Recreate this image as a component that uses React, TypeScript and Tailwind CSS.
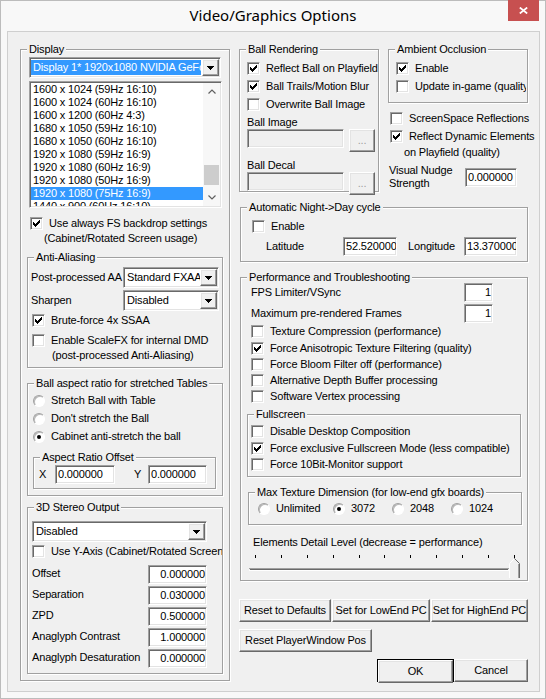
import React from 'react';

const sunken =
  'border border-t-[#a0a0a0] border-l-[#a0a0a0] border-r-white border-b-white shadow-[inset_1px_1px_0_#696969,inset_-1px_-1px_0_#e3e3e3]';
const raised =
  'border border-t-white border-l-white border-r-[#696969] border-b-[#696969] shadow-[inset_-1px_-1px_0_#a0a0a0,inset_1px_1px_0_#e3e3e3] bg-[#f0f0f0]';

function Group({ label, className = '', children }: { label: string; className?: string; children?: React.ReactNode }) {
  return (
    <div className={`relative shrink-0 border border-[#a0a0a0] shadow-[1px_1px_0_#fff,inset_1px_1px_0_#fff] ${className}`}>
      <span className="absolute -top-[7px] left-[6px] px-[2px] bg-[#f0f0f0] leading-[13px] whitespace-nowrap">{label}</span>
      <div className="flex flex-col">{children}</div>
    </div>
  );
}

function CheckMark() {
  const px = [
    [6, 0, 1], [5, 1, 2], [0, 2, 1], [4, 2, 3], [0, 3, 2], [3, 3, 3], [0, 4, 5], [1, 5, 3], [2, 6, 1],
  ];
  return (
    <svg width="7" height="7" viewBox="0 0 7 7" shapeRendering="crispEdges">
      {px.map(([x, y, w], i) => (
        <rect key={i} x={x} y={y} width={w} height={1} fill="#000" />
      ))}
    </svg>
  );
}

function Check({ on = false, children, className = '', textClass = '' }: { on?: boolean; children: React.ReactNode; className?: string; textClass?: string }) {
  return (
    <div className={`flex items-center h-[13px] ${className}`}>
      <span className={`${sunken} w-[13px] h-[13px] bg-white flex items-center justify-center shrink-0`}>{on && <CheckMark />}</span>
      <span className={`ml-[6px] whitespace-nowrap leading-[13px] ${textClass}`}>{children}</span>
    </div>
  );
}

function Radio({ on = false, children, className = '' }: { on?: boolean; children: React.ReactNode; className?: string }) {
  return (
    <div className={`flex items-center h-[13px] ${className}`}>
      <span className="w-[12px] h-[12px] rounded-full border border-t-[#a0a0a0] border-l-[#a0a0a0] border-r-white border-b-white bg-white shadow-[inset_1px_1px_0_#b8b8b8] flex items-center justify-center shrink-0">
        {on && <span className="w-[4px] h-[4px] rounded-full bg-black" />}
      </span>
      <span className="ml-[6px] whitespace-nowrap leading-[13px]">{children}</span>
    </div>
  );
}

function Edit({ value = '', className = '', right = false, disabled = false }: { value?: string; className?: string; right?: boolean; disabled?: boolean }) {
  return (
    <div
      className={`${sunken} h-[19px] shrink-0 flex items-center overflow-hidden whitespace-nowrap ${disabled ? 'bg-[#f0f0f0]' : 'bg-white'} ${right ? 'justify-end pr-[1px]' : 'pl-[2px]'} ${className}`}
    >
      {value}
    </div>
  );
}

function Arrow() {
  return (
    <svg width="7" height="4" viewBox="0 0 7 4" shapeRendering="crispEdges">
      <rect x="0" y="0" width="7" height="1" fill="#000" />
      <rect x="1" y="1" width="5" height="1" fill="#000" />
      <rect x="2" y="2" width="3" height="1" fill="#000" />
      <rect x="3" y="3" width="1" height="1" fill="#000" />
    </svg>
  );
}

function Combo({ value, className = '', selected = false }: { value: string; className?: string; selected?: boolean }) {
  return (
    <div className={`${sunken} bg-white h-[21px] p-[1px] flex shrink-0 ${className}`}>
      <div className="flex-1 min-w-0 overflow-hidden py-[1px] pr-[1px]">
        <div className={`h-full flex items-center pl-[2px] whitespace-nowrap ${selected ? 'bg-[#3399ff] text-white' : ''}`}>{value}</div>
      </div>
      <div className={`${raised} w-[17px] flex items-center justify-center`}>
        <Arrow />
      </div>
    </div>
  );
}

function Button({ children, className = '', gray = false }: { children: React.ReactNode; className?: string; gray?: boolean }) {
  return (
    <div className={`${raised} h-[23px] shrink-0 flex items-center justify-center whitespace-nowrap ${gray ? 'text-[#a0a0a0]' : ''} ${className}`}>
      {children}
    </div>
  );
}

function Chevron({ up }: { up?: boolean }) {
  return (
    <svg width="8" height="5" viewBox="0 0 8 5">
      <polyline points={up ? '0.5,4.5 4,1 7.5,4.5' : '0.5,0.5 4,4 7.5,0.5'} fill="none" stroke="#606060" strokeWidth="1.2" />
    </svg>
  );
}

const modes = [
  '1600 x 1024 (59Hz 16:10)',
  '1600 x 1024 (60Hz 16:10)',
  '1600 x 1200 (60Hz 4:3)',
  '1680 x 1050 (59Hz 16:10)',
  '1680 x 1050 (60Hz 16:10)',
  '1920 x 1080 (59Hz 16:9)',
  '1920 x 1080 (60Hz 16:9)',
  '1920 x 1080 (50Hz 16:9)',
  '1920 x 1080 (75Hz 16:9)',
  '1440 x 900 (60Hz 16:10)',
];

function ListBox() {
  return (
    <div className={`${sunken} bg-white p-[1px] flex ml-[8px] mt-[3px] w-[193px] h-[127px]`}>
      <div className="flex-1 min-w-0 overflow-hidden">
        {modes.map((m, i) => (
          <div key={m} className={`h-[13px] leading-[13px] pl-[2px] whitespace-nowrap ${i === 8 ? 'bg-[#3399ff] text-white' : ''}`}>
            {m}
          </div>
        ))}
      </div>
      <div className="w-[17px] flex flex-col bg-[#f7f7f7]">
        <div className="h-[17px] flex items-center justify-center">
          <Chevron up />
        </div>
        <div className="flex-1">
          <div className="mt-[65px] mx-[1px] h-[20px] bg-[#cdcdcd]" />
        </div>
        <div className="h-[17px] flex items-center justify-center">
          <Chevron />
        </div>
      </div>
    </div>
  );
}

function Slider() {
  const ticks = [7, 33, 59, 85, 111, 136, 162, 188, 214, 240, 266];
  return (
    <svg width="274" height="27" viewBox="0 0 274 27" shapeRendering="crispEdges" className="mt-[3px] ml-[7px]">
      {ticks.map((x, i) => (
        <rect key={x} x={x} y={3} width={1} height={i === ticks.length - 1 ? 6 : 3} fill="#000" />
      ))}
      <rect x="1" y="16" width="260" height="1" fill="#a0a0a0" />
      <rect x="2" y="17" width="258" height="1" fill="#696969" />
      <rect x="1" y="18" width="261" height="1" fill="#ffffff" />
      <polygon points="261,11 266,6 271,11 271,26 261,26" fill="#f0f0f0" shapeRendering="auto" />
      <polyline points="261.5,26 261.5,11.5 266.5,6.5" fill="none" stroke="#ffffff" strokeWidth="1" shapeRendering="auto" />
      <polyline points="266.5,6.5 271.5,11.5 271.5,26" fill="none" stroke="#696969" strokeWidth="1" shapeRendering="auto" />
      <polyline points="270.5,12 270.5,26" fill="none" stroke="#a0a0a0" strokeWidth="1" />
    </svg>
  );
}

export default function App() {
  return (
    <div className="w-[546px] h-[699px] bg-[#f8f8f8] border border-[#bcbcbc] flex flex-col font-['Liberation_Sans',Arial,sans-serif] text-[11px] tracking-[-0.15px] leading-[13px] text-black select-none">
      <div className="relative h-[30px] shrink-0 flex items-center justify-center">
        <span className="font-['Noto_Sans',sans-serif] text-[15px] tracking-normal leading-[20px] -mt-[2px]">Video/Graphics Options</span>
        <div className="absolute -top-[1px] right-[6px] w-[31px] h-[21px] bg-[#c75050] flex items-center justify-center">
          <svg width="9" height="7" viewBox="0 0 9 7">
            <path d="M0.8 0.5 L8.2 6.5 M8.2 0.5 L0.8 6.5" stroke="#fff" strokeWidth="1.7" />
          </svg>
        </div>
      </div>

      <div className="ml-[6px] w-[533px] h-[661px] border border-[#cfcfcf] bg-[#f0f0f0] flex items-start">
        {/* left column */}
        <div className="ml-[12px] mt-[17px] w-[210px] shrink-0">
          <Group label="Display" className="w-[210px] h-[632px]">
            <Combo className="mt-[7px] ml-[8px] w-[192px]" value="Display 1* 1920x1080 NVIDIA GeForce GTX 970" selected />
            <ListBox />
            <Check on className="mt-[9px] ml-[9px]">Use always FS backdrop settings</Check>
            <div className="mt-[2px] ml-[23px] h-[13px] whitespace-nowrap">(Cabinet/Rotated Screen usage)</div>

            <Group label="Anti-Aliasing" className="mt-[12px] ml-[6px] w-[196px] h-[111px]">
              <div className="mt-[9px] flex items-center h-[21px]">
                <span className="pl-[3px] w-[95px] whitespace-nowrap">Post-processed AA</span>
                <Combo className="w-[96px]" value="Standard FXAA" />
              </div>
              <div className="mt-[2px] flex items-center h-[21px]">
                <span className="pl-[3px] w-[95px]">Sharpen</span>
                <Combo className="w-[96px]" value="Disabled" />
              </div>
              <Check on className="mt-[3px] ml-[4px]">Brute-force 4x SSAA</Check>
              <Check className="mt-[7px] ml-[4px]">Enable ScaleFX for internal DMD</Check>
              <div className="mt-[2px] ml-[24px] h-[13px] whitespace-nowrap">(post-processed Anti-Aliasing)</div>
            </Group>

            <Group label="Ball aspect ratio for stretched Tables" className="mt-[15px] ml-[6px] w-[196px] h-[113px]">
              <Radio className="mt-[10px] ml-[5px]">Stretch Ball with Table</Radio>
              <Radio className="mt-[5px] ml-[5px]">Don't stretch the Ball</Radio>
              <Radio on className="mt-[5px] ml-[5px]">Cabinet anti-stretch the ball</Radio>
              <Group label="Aspect Ratio Offset" className="mt-[14px] ml-[5px] w-[183px] h-[32px]">
                <div className="mt-[7px] h-[19px] flex items-center">
                  <span className="ml-[5px] w-[16px]">X</span>
                  <Edit className="w-[60px]" value="0.000000" />
                  <span className="ml-[19px] w-[14px]">Y</span>
                  <Edit className="w-[59px]" value="0.000000" />
                </div>
              </Group>
            </Group>

            <Group label="3D Stereo Output" className="mt-[11px] ml-[6px] w-[196px] h-[167px]">
              <Combo className="mt-[13px] ml-[4px] w-[175px]" value="Disabled" />
              <Check className="mt-[3px] ml-[4px]" textClass="max-w-[171px] overflow-hidden">
                Use Y-Axis (Cabinet/Rotated Screen usage)
              </Check>
              {[
                ['Offset', '0.000000'],
                ['Separation', '0.030000'],
                ['ZPD', '0.500000'],
                ['Anaglyph Contrast', '1.000000'],
                ['Anaglyph Desaturation', '0.000000'],
              ].map(([k, v], i) => (
                <div key={k} className={`${i === 0 ? 'mt-[7px]' : 'mt-[2px]'} h-[19px] flex items-center pl-[4px]`}>
                  <span className="w-[116px] whitespace-nowrap -mt-[2px]">{k}</span>
                  <Edit className="w-[59px]" value={v} right />
                </div>
              ))}
            </Group>
          </Group>
        </div>

        {/* right column */}
        <div className="ml-[9px] mt-[17px] w-[289px] shrink-0 flex flex-col">
          <div className="flex items-start h-[143px]">
            <Group label="Ball Rendering" className="w-[140px] h-[143px]">
              <Check on className="mt-[12px] ml-[7px]">Reflect Ball on Playfield</Check>
              <Check on className="mt-[5px] ml-[7px]">Ball Trails/Motion Blur</Check>
              <Check className="mt-[5px] ml-[7px]">Overwrite Ball Image</Check>
              <div className="mt-[5px] ml-[7px] h-[13px]">Ball Image</div>
              <div className="ml-[7px] flex">
                <Edit className="w-[97px]" disabled />
                <Button gray className="ml-[5px] w-[26px] h-[19px]">...</Button>
              </div>
              <div className="mt-[7px] ml-[7px] h-[13px]">Ball Decal</div>
              <div className="ml-[7px] flex">
                <Edit className="w-[97px]" disabled />
                <Button gray className="ml-[5px] w-[26px] h-[19px]">...</Button>
              </div>
            </Group>

            <div className="ml-[9px] w-[140px] flex flex-col">
              <Group label="Ambient Occlusion" className="w-[140px] h-[54px]">
                <Check on className="mt-[12px] ml-[7px]">Enable</Check>
                <Check className="mt-[5px] ml-[7px]" textClass="max-w-[111px] overflow-hidden">
                  Update in-game (quality)
                </Check>
              </Group>
              <Check className="mt-[9px] ml-[2px]">ScreenSpace Reflections</Check>
              <Check on className="mt-[5px] ml-[2px]">Reflect Dynamic Elements</Check>
              <div className="mt-[3px] ml-[16px] h-[13px] whitespace-nowrap">on Playfield (quality)</div>
              <div className="mt-[5px] flex items-start">
                <div className="ml-[1px] w-[76px] leading-[13px]">
                  <div>Visual Nudge</div>
                  <div>Strength</div>
                </div>
                <Edit className="mt-[4px] w-[52px]" value="0.000000" />
              </div>
            </div>
          </div>

          <Group label="Automatic Night->Day cycle" className="mt-[15px] ml-[1px] w-[288px] h-[55px]">
            <Check className="mt-[12px] ml-[11px]">Enable</Check>
            <div className="mt-[4px] h-[19px] flex items-center">
              <span className="ml-[25px] w-[77px]">Latitude</span>
              <Edit className="w-[54px]" value="52.520000" />
              <span className="ml-[11px] w-[56px]">Longitude</span>
              <Edit className="w-[53px]" value="13.370000" />
            </div>
          </Group>

          <Group label="Performance and Troubleshooting" className="mt-[15px] ml-[1px] w-[288px] h-[304px]">
            <div className="mt-[5px] ml-[10px] h-[19px] flex items-center">
              <span className="w-[213px]">FPS Limiter/VSync</span>
              <Edit className="w-[29px]" value="1" right />
            </div>
            <div className="mt-[2px] ml-[10px] h-[19px] flex items-center">
              <span className="w-[213px]">Maximum pre-rendered Frames</span>
              <Edit className="w-[29px]" value="1" right />
            </div>
            <Check className="mt-[2px] ml-[10px]">Texture Compression (performance)</Check>
            <Check on className="mt-[4px] ml-[10px]">Force Anisotropic Texture Filtering (quality)</Check>
            <Check className="mt-[3px] ml-[10px]">Force Bloom Filter off (performance)</Check>
            <Check className="mt-[3px] ml-[10px]">Alternative Depth Buffer processing</Check>
            <Check className="mt-[3px] ml-[10px]">Software Vertex processing</Check>

            <Group label="Fullscreen" className="mt-[11px] ml-[6px] w-[274px] h-[63px]">
              <Check className="mt-[10px] ml-[3px]">Disable Desktop Composition</Check>
              <Check on className="mt-[4px] ml-[3px]">Force exclusive Fullscreen Mode (less compatible)</Check>
              <Check className="mt-[3px] ml-[3px]">Force 10Bit-Monitor support</Check>
            </Group>

            <Group label="Max Texture Dimension (for low-end gfx boards)" className="mt-[15px] ml-[7px] w-[274px] h-[33px]">
              <div className="mt-[9px] ml-[9px] h-[13px] flex items-center">
                <Radio className="w-[75px]">Unlimited</Radio>
                <Radio on className="w-[59px]">3072</Radio>
                <Radio className="w-[59px]">2048</Radio>
                <Radio>1024</Radio>
              </div>
            </Group>

            <div className="mt-[11px] ml-[12px] h-[13px] whitespace-nowrap">Elements Detail Level (decrease = performance)</div>
            <Slider />
          </Group>

          <div className="mt-[18px] flex">
            <Button className="w-[92px]">Reset to Defaults</Button>
            <Button className="ml-[1px] w-[98px]">Set for LowEnd PC</Button>
            <Button className="ml-[1px] w-[97px]">Set for HighEnd PC</Button>
          </div>
          <Button className="mt-[7px] w-[133px]">Reset PlayerWindow Pos</Button>
          <div className="mt-[7px] ml-[138px] flex">
            <div className="w-[78px] h-[23px] border border-black flex">
              <Button className="flex-1 h-[21px]">OK</Button>
            </div>
            <Button className="w-[74px]">Cancel</Button>
          </div>
        </div>
      </div>
    </div>
  );
}
